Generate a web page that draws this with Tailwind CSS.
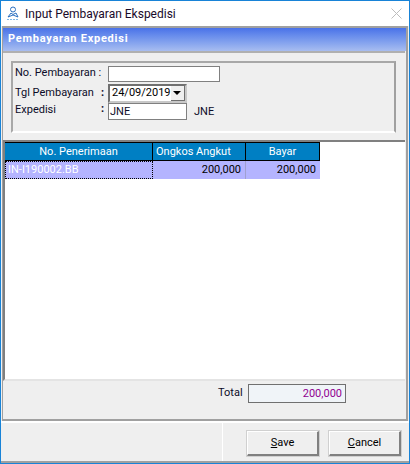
<!DOCTYPE html>
<html lang="en">
<head>
    <meta charset="UTF-8">
    <title>Input Pembayaran Ekspedisi</title>
    <script src="https://cdn.jsdelivr.net/npm/@tailwindcss/browser@4"></script>
</head>
<body class="bg-white">
    <div class="w-[410px] h-[464px] flex flex-col border border-[#1883d7] bg-[#efefef] overflow-hidden font-['Roboto',sans-serif] text-[11px] text-[#0c0c28] whitespace-nowrap">
        <!-- Title bar -->
        <div class="h-[25px] shrink-0 bg-white flex items-center pl-[6px] pr-[7px]">
            <svg width="12" height="15" viewBox="0 0 12 15" fill="none" stroke="#2a6fc0" stroke-width="1">
                <circle cx="6" cy="3.5" r="2.5"/>
                <path d="M1 11 L4 7 L6 8.5 L9 7 L11 11 M1 11 L6 9 L11 11"/>
                <path d="M0 13.5 H12" stroke="#7fb8e8" stroke-dasharray="2 1"/>
            </svg>
            <span class="ml-[6px] text-[12px] text-[#1a0a2a]">Input Pembayaran Ekspedisi</span>
            <svg class="ml-auto" width="11" height="11" viewBox="0 0 11 11" stroke="#bdbdbd" stroke-width="1">
                <path d="M0.5 0.5 L10.5 10.5 M10.5 0.5 L0.5 10.5"/>
            </svg>
        </div>

        <!-- Main panel -->
        <div class="h-[395px] shrink-0 ml-[1px] mr-[1px] border-2 border-[#a0a0a0] border-l-[1px] flex flex-col">
            <div class="h-[23px] shrink-0 bg-linear-to-b from-[#4a72e8] to-[#a8bdf0] flex items-center pl-[5px] text-white font-bold tracking-[0.75px]">Pembayaran Expedisi</div>
            <div class="flex-1 border-t-2 border-[#b0b0b0] mr-[1px] flex flex-col">
                <!-- Form group -->
                <div class="h-[72px] shrink-0 mt-[8px] ml-[8px] mr-[9px] border-2 border-[#a8a8a8] border-b-white border-r-[#a0a0a0] pt-[2px] pl-[2px] flex flex-col">
                    <div class="flex items-center h-[17px]">
                        <span class="w-[93px]">No. Pembayaran :</span>
                        <div class="w-[112px] h-[16px] bg-white border border-[#808080]"></div>
                    </div>
                    <div class="flex items-center h-[19px] mt-[2px]">
                        <span class="w-[86px]">Tgl Pembayaran</span><span class="w-[7px] font-bold">:</span>
                        <div class="w-[79px] h-[19px] bg-white border-2 border-[#707070] border-b-[#c8c8c8] border-r-[#c8c8c8] flex items-center pl-[2px] text-black">
                            <span class="flex-1">24/09/2019</span>
                            <div class="w-[16px] h-[15px] bg-[#efefef] border-b border-r border-[#707070] flex items-center justify-center">
                                <div class="w-0 h-0 border-l-[4px] border-r-[4px] border-t-[4px] border-l-transparent border-r-transparent border-t-black"></div>
                            </div>
                        </div>
                    </div>
                    <div class="flex items-start h-[17px]">
                        <span class="w-[86px] leading-[14px]">Expedisi</span><span class="w-[7px] font-bold leading-[12px]">:</span>
                        <div class="w-[79px] h-[17px] bg-white border border-[#808080] pl-[1px] leading-[16px]">JNE</div>
                        <span class="ml-[7px] leading-[18px]">JNE</span>
                    </div>
                </div>

                <!-- Grid -->
                <div class="h-[241px] shrink-0 mt-[7px] bg-white border-t-2 border-l-2 border-[#808080] border-b-2 border-b-[#e4e4e4] flex flex-col">
                    <div class="flex h-[19px] text-white bg-white text-center">
                        <div class="w-[148px] bg-[#007fc3] border-t border-r border-b border-black leading-[17px]">No. Penerimaan</div>
                        <div class="w-[93px] bg-[#007fc3] border-t border-r border-b border-black leading-[17px] text-left pl-[3px]">Ongkos Angkut</div>
                        <div class="w-[74px] bg-[#007fc3] border-t border-r border-b border-black leading-[17px]">Bayar</div>
                    </div>
                    <div class="flex h-[18px] w-[315px] bg-[#b4b4ff] text-black">
                        <div class="w-[148px] border border-dotted border-black text-white pl-[2px] leading-[16px]">IN-I190002.BB</div>
                        <div class="w-[93px] border-r border-[#a0a0d0] text-right pr-[4px] leading-[18px]">200,000</div>
                        <div class="w-[74px] text-right pr-[4px] leading-[18px]">200,000</div>
                    </div>
                </div>

                <!-- Total -->
                <div class="flex items-center mt-[3px] ml-[215px]">
                    <span class="w-[30px]">Total</span>
                    <div class="w-[98px] h-[19px] bg-[#f0f4f8] border border-[#707070] text-right pr-[3px] leading-[18px] text-[#900090]">200,000</div>
                </div>
            </div>
        </div>

        <!-- Footer -->
        <div class="flex-1 border-t-2 border-white border-b-2 border-b-[#a0a0a0] flex">
            <div class="w-[222px] shrink-0 border-r border-white"></div>
            <div class="flex gap-[10px] pl-[24px] pt-[8px]">
                <button class="w-[72px] h-[25px] bg-[#efefef] border border-white border-r-2 border-b-2 border-r-[#808080] border-b-[#808080] outline-1 outline-[#d0d0d0] text-black"><u>S</u>ave</button>
                <button class="w-[72px] h-[25px] bg-[#efefef] border border-white border-r-2 border-b-2 border-r-[#808080] border-b-[#808080] outline-1 outline-[#d0d0d0] text-black"><u>C</u>ancel</button>
            </div>
        </div>
    </div>
</body>
</html>
